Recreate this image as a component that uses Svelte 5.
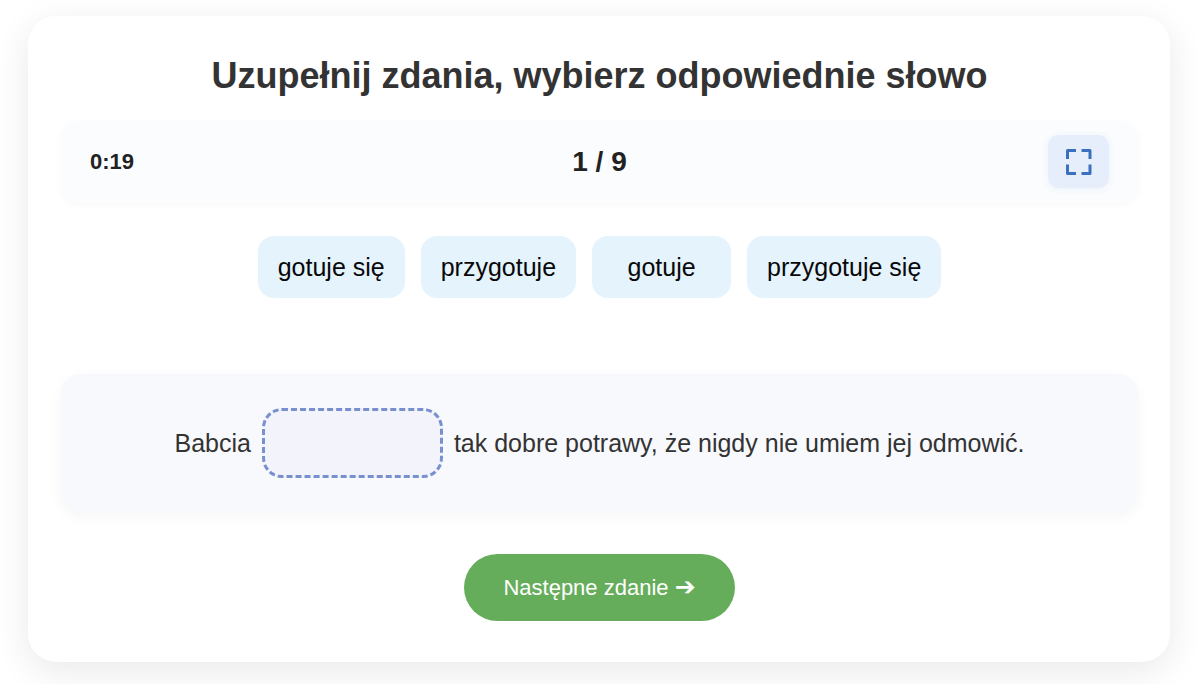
<script>
  const words = ['gotuje się', 'przygotuje', 'gotuje', 'przygotuje się'];
  const total = 9;
  let current = $state(1);
  let answer = $state('');

  function next() {
    if (current < total) current += 1;
    answer = '';
  }
</script>

<main class="card">
  <h1>Uzupełnij zdania, wybierz odpowiednie słowo</h1>

  <div class="status">
    <span class="time">0:19</span>
    <span class="progress">{current} / {total}</span>
    <button class="fullscreen" type="button" aria-label="Pełny ekran">
      <svg viewBox="0 0 26 26" width="26" height="26" aria-hidden="true">
        <path d="M1.500 10V1.500H10M15.500 1.500H24V10M24 15.500V24.500H15.500M10 24.500H1.500V15.500" />
      </svg>
    </button>
  </div>

  <div class="words">
    {#each words as word}
      <button class="word" type="button" onclick={() => (answer = word)}>{word}</button>
    {/each}
  </div>

  <p class="sentence">
    <span>Babcia</span>
    <span class="blank">{answer}</span>
    <span>tak dobre potrawy, że nigdy nie umiem jej odmowić.</span>
  </p>

  <button class="next" type="button" onclick={next}>Następne zdanie <span class="arrow">➔</span></button>
</main>

<style>
  :global(body) {
    background: #fff;
    font-family: "Liberation Sans", Arial, sans-serif;
    color: #333;
  }

  button {
    border: 0;
    font-family: inherit;
    cursor: pointer;
  }

  .card {
    display: flex;
    flex-direction: column;
    align-items: center;
    margin: 16px 30px 22px 28px;
    padding: 40px 32px 41px 33px;
    border-radius: 28px;
    background: #fff;
    box-shadow: 0 9px 36px rgba(0, 0, 0, 0.09);
  }

  h1 {
    margin: 0 0 25px;
    font-size: 36px;
    line-height: 40px;
    text-align: center;
  }

  .status {
    display: grid;
    grid-template-columns: 1fr auto 1fr;
    align-items: center;
    align-self: stretch;
    box-sizing: border-box;
    padding: 14px 29px 15px;
    border-radius: 18px;
    background: #fafcfe;
    box-shadow: 0 2px 9px rgba(0, 0, 0, 0.03);
    color: #222;
    font-weight: bold;
  }

  .time {
    font-size: 22px;
  }

  .progress {
    font-size: 28px;
  }

  .fullscreen {
    display: flex;
    align-items: center;
    justify-content: center;
    justify-self: end;
    width: 61px;
    height: 53px;
    padding: 0;
    border-radius: 11px;
    background: #e5eefa;
    box-shadow: 0 1px 7px rgba(60, 120, 200, 0.08);
  }

  .fullscreen path {
    fill: none;
    stroke: #3a70be;
    stroke-width: 3;
    stroke-linejoin: round;
  }

  .words {
    display: flex;
    flex-wrap: wrap;
    justify-content: center;
    gap: 16px;
    margin: 33px 0 76px;
  }

  .word {
    min-width: 139px;
    height: 62px;
    padding: 0 20px;
    border-radius: 16px;
    background: #e5f3fd;
    color: #080808;
    font-size: 25px;
  }

  .sentence {
    display: flex;
    flex-wrap: wrap;
    align-items: center;
    align-self: stretch;
    justify-content: center;
    gap: 11px;
    margin: 0 0 41px;
    padding: 34px 28px 35px;
    border-radius: 20px;
    background: #f8f9fd;
    box-shadow: 0 4px 14px rgba(0, 0, 0, 0.04);
    font-size: 25px;
  }

  .blank {
    display: flex;
    align-items: center;
    justify-content: center;
    box-sizing: border-box;
    min-width: 181px;
    height: 70px;
    padding: 0 14px;
    border: 3px dashed #7890ce;
    border-radius: 20px;
    background: #f3f3fc;
  }

  .next {
    height: 67px;
    padding: 0 39px;
    border-radius: 34px;
    background: #66ad5b;
    color: #fff;
    font-size: 22px;
  }

  .arrow {
    font-family: "DejaVu Sans", sans-serif;
    font-size: 25px;
    line-height: 22px;
  }
</style>
